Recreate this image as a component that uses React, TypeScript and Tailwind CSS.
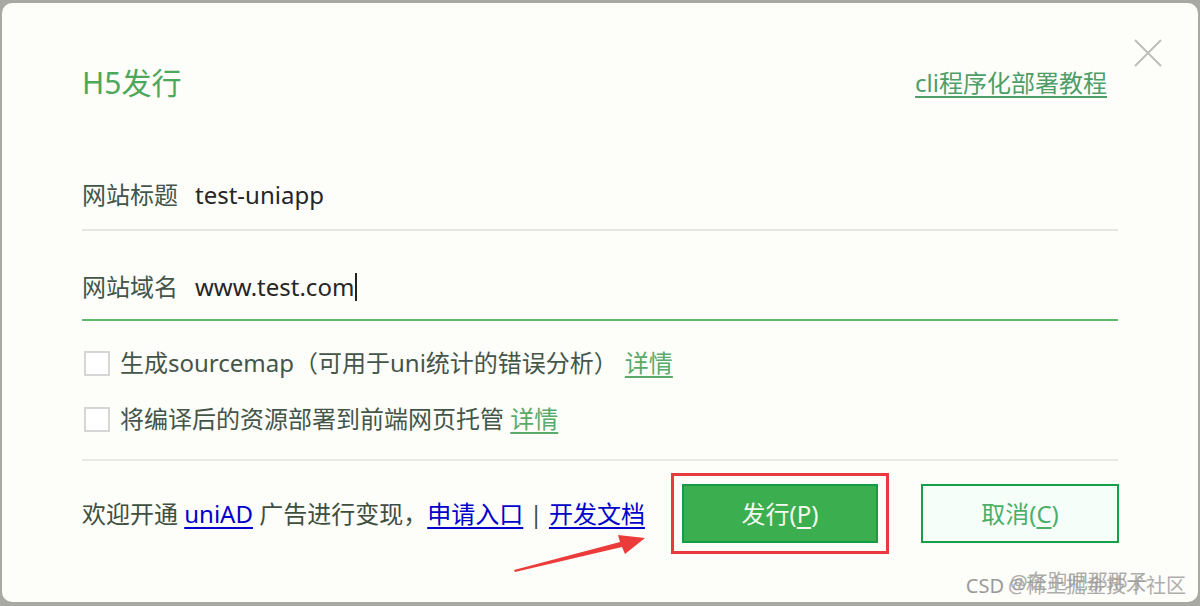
import React from 'react';

const font = { fontFamily: '"Noto Sans", "Noto Sans CJK SC", sans-serif' };

const Checkbox = () => (
  <span className="w-[26px] h-[25px] border-2 border-[#d6d6d4] bg-white shrink-0" />
);

const App = () => {
  return (
    <div
      className="w-[1200px] h-[606px] bg-[#a9a9a3] pt-[3px] px-[2px] pb-[4px] overflow-hidden"
      style={font}
    >
      <div className="relative h-full rounded-[10px] bg-[#fdfdf9] px-[80px] pt-[40px]">
        {/* close */}
        <svg
          className="absolute left-[1131px] top-[35px]"
          width="30"
          height="30"
          viewBox="0 0 30 30"
        >
          <path d="M2 2 L28 28 M28 2 L2 28" stroke="#bdbdbb" strokeWidth="2" />
        </svg>

        {/* header */}
        <div className="h-[80px] flex items-center justify-between">
          <h1 className="text-[30px] leading-none text-[#4ea85b]">H5发行</h1>
          <a className="text-[24px] leading-none text-[#4d9e68] underline underline-offset-4 mr-[11px]">
            cli程序化部署教程
          </a>
        </div>

        {/* form rows */}
        <div className="pt-[56px] pb-[18px] flex items-center border-b-2 border-[#e6e6e4]">
          <span className="w-[113px] text-[24px] leading-[32px] text-[#44554a]">网站标题</span>
          <span className="text-[24px] leading-[32px] text-[#262626]">test-uniapp</span>
        </div>
        <div className="pt-[40px] pb-[16px] flex items-center border-b-2 border-[#5cba6a]">
          <span className="w-[113px] text-[24px] leading-[32px] text-[#44554a]">网站域名</span>
          <span className="text-[24px] leading-[32px] text-[#262626]">www.test.com</span>
          <span className="w-[2px] h-[28px] bg-[#222] ml-[1px]" />
        </div>

        {/* options */}
        <div className="mt-[29px] flex flex-col gap-[30px] pl-[2px]">
          <label className="h-[26px] flex items-center gap-[10px] text-[24px] text-[#44554a]">
            <Checkbox />
            <span>
              生成sourcemap（可用于uni统计的错误分析）
              <a className="ml-[7px] text-[#5aaa6a] underline underline-offset-4">详情</a>
            </span>
          </label>
          <label className="h-[26px] flex items-center gap-[10px] text-[24px] text-[#44554a]">
            <Checkbox />
            <span>
              将编译后的资源部署到前端网页托管{' '}
              <a className="text-[#5aaa6a] underline underline-offset-4">详情</a>
            </span>
          </label>
        </div>

        <div className="mt-[27px] border-t-2 border-[#e8e8e6]" />

        {/* footer */}
        <div className="pt-[12px] flex items-center">
          <p className="text-[24px] text-[#3f4f3f] whitespace-nowrap">
            欢迎开通 <a className="text-[#0000cc] underline underline-offset-4">uniAD</a> 广告进行变现，
            <a className="text-[#0000cc] underline underline-offset-4">申请入口</a> |{' '}
            <a className="text-[#0000cc] underline underline-offset-4">开发文档</a>
          </p>
          <div className="ml-auto flex items-center gap-[32px]">
            <div className="border-[3px] border-[#e8393d] p-[8px]">
              <button className="w-[196px] h-[59px] bg-[#3bae50] border-2 border-[#169c46] text-[24px] text-[#f3faf1]">
                发行(<span className="underline underline-offset-4">P</span>)
              </button>
            </div>
            <button className="w-[198px] h-[59px] bg-[#f6fefa] border-2 border-[#17a049] text-[24px] text-[#4caf68] mr-[-1px]">
              取消(<span className="underline underline-offset-4">C</span>)
            </button>
          </div>
        </div>

        {/* annotation arrow */}
        <svg
          className="absolute left-[500px] top-[522px]"
          width="160"
          height="60"
          viewBox="0 0 160 60"
        >
          <polygon
            points="12,45 118,17 116,10 143,13 123,29 120,22 13,47"
            fill="#ec3b3b"
          />
        </svg>

        {/* watermark */}
        <div className="absolute right-[12px] bottom-[6px] text-[20px] text-[#9a9a98] leading-none whitespace-nowrap">
          <span className="relative">
            CSD
            <span className="absolute left-[44px] top-0 opacity-80">@在跑吧那那子</span>
            <span className="ml-[4px] opacity-80">@稀土掘金技术社区</span>
          </span>
        </div>
      </div>
    </div>
  );
};

export default App;
